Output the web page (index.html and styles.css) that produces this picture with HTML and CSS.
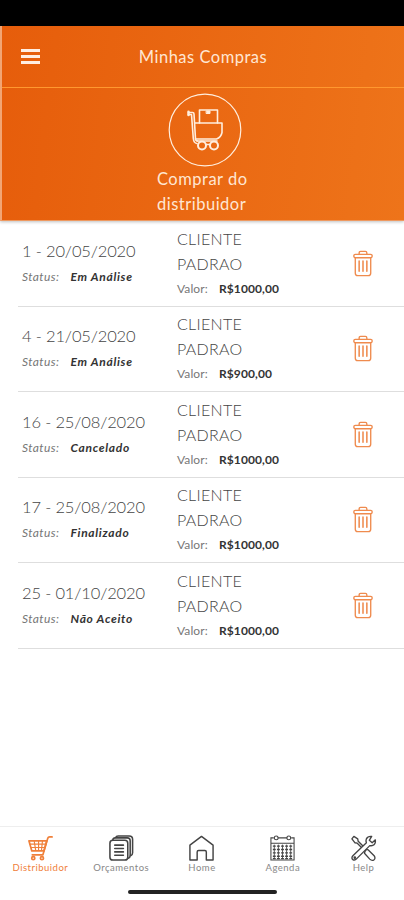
FILE: index.html
```html
<!DOCTYPE html>
<html lang="pt-br">

<head>
    <meta charset="UTF-8">
    <meta name="viewport" content="width=device-width, initial-scale=1.0">
    <title>Minhas Compras</title>
    <link rel="stylesheet" href="styles.css">
</head>

<body>
    <!-- Ícone reutilizado em cada compra -->
    <svg class="simbolos" width="0" height="0">
        <symbol id="lixeira" viewBox="0 0 22 28">
            <g fill="none" stroke="#ef8b4e" stroke-width="1.4" stroke-linecap="round" stroke-linejoin="round">
                <path d="M7 4.5V3q0-1.5 1.5-1.5h5Q15 1.5 15 3v1.500" />
                <rect x="1.500" y="4.500" width="19" height="3.500" rx="1.500" />
                <path d="M3 8v16q0 2.500 2.500 2.500h11q2.500 0 2.500-2.500V8" />
                <path d="M7 11.500v10.500M11 11.500v10.500M15 11.500v10.500" stroke-width="1.600" />
            </g>
        </symbol>
    </svg>

    <div class="barra-status"></div>

    <header>
        <div class="topo">
            <button class="menu" aria-label="Menu">
                <span></span>
                <span></span>
                <span></span>
            </button>
            <h1>Minhas Compras</h1>
        </div>
        <a href="#" class="comprar">
            <svg width="74" height="74" viewBox="0 0 74 74" fill="none" stroke="#ffeede" stroke-width="1.6" stroke-linejoin="round" stroke-linecap="round">
                <circle cx="37" cy="37" r="35.800" stroke-width="1.200" />
                <path d="M20.500 19.500h4q1.500 0 1.500 1.500l1.500 25q.2 2 2 2" />
                <path d="M20.500 21.500h3l1.800 24q.5 4.500 3.500 5" />
                <path d="M20.500 18.800v3.200" stroke-width="2.500" />
                <path d="M27 30h27v9.500q-1 5-5.500 6.500H27.500" />
                <path d="M31.500 30V17h18v13" />
                <path d="M38.500 18h3.500v2.500h-3.500z" fill="#ffeede" stroke-width="1" />
                <path d="M29 48h20M38.500 51.500h3" />
                <circle cx="34" cy="52.500" r="4" stroke-width="2" />
                <circle cx="46" cy="52.500" r="4" stroke-width="2" />
            </svg>
            <span class="comprar-texto">Comprar do distribuidor</span>
        </a>
    </header>

    <main>
        <div class="compra">
            <div class="pedido">
                <p class="data">1 - 20/05/2020</p>
                <p class="status">Status: <strong>Em Análise</strong></p>
            </div>
            <div class="cliente">
                <p class="nome">CLIENTE PADRAO</p>
                <p class="valor">Valor: <strong>R$1000,00</strong></p>
            </div>
            <button class="remover" aria-label="Remover"><svg width="22" height="27"><use href="#lixeira" /></svg></button>
        </div>
        <div class="compra">
            <div class="pedido">
                <p class="data">4 - 21/05/2020</p>
                <p class="status">Status: <strong>Em Análise</strong></p>
            </div>
            <div class="cliente">
                <p class="nome">CLIENTE PADRAO</p>
                <p class="valor">Valor: <strong>R$900,00</strong></p>
            </div>
            <button class="remover" aria-label="Remover"><svg width="22" height="27"><use href="#lixeira" /></svg></button>
        </div>
        <div class="compra">
            <div class="pedido">
                <p class="data">16 - 25/08/2020</p>
                <p class="status">Status: <strong>Cancelado</strong></p>
            </div>
            <div class="cliente">
                <p class="nome">CLIENTE PADRAO</p>
                <p class="valor">Valor: <strong>R$1000,00</strong></p>
            </div>
            <button class="remover" aria-label="Remover"><svg width="22" height="27"><use href="#lixeira" /></svg></button>
        </div>
        <div class="compra">
            <div class="pedido">
                <p class="data">17 - 25/08/2020</p>
                <p class="status">Status: <strong>Finalizado</strong></p>
            </div>
            <div class="cliente">
                <p class="nome">CLIENTE PADRAO</p>
                <p class="valor">Valor: <strong>R$1000,00</strong></p>
            </div>
            <button class="remover" aria-label="Remover"><svg width="22" height="27"><use href="#lixeira" /></svg></button>
        </div>
        <div class="compra">
            <div class="pedido">
                <p class="data">25 - 01/10/2020</p>
                <p class="status">Status: <strong>Não Aceito</strong></p>
            </div>
            <div class="cliente">
                <p class="nome">CLIENTE PADRAO</p>
                <p class="valor">Valor: <strong>R$1000,00</strong></p>
            </div>
            <button class="remover" aria-label="Remover"><svg width="22" height="27"><use href="#lixeira" /></svg></button>
        </div>
    </main>

    <nav>
        <a href="#" class="ativo">
            <svg width="27" height="27" viewBox="0 0 28 28" fill="none" stroke="currentColor" stroke-width="1.8" stroke-linecap="round" stroke-linejoin="round">
                <path d="M26 2h-2.500q-1.500 0-2 1.500L16.500 20.500H5.500" />
                <path d="M2 6h18.500l-3 10.500H5z" />
                <path d="M3 9.500h16.500M4 13h14.500M7.500 6.500l1.500 9.500M12 6.500v9.500M16 6.500L15 16" stroke-width="1.200" />
                <circle cx="6.500" cy="24" r="1.600" />
                <circle cx="15.500" cy="24" r="1.600" />
            </svg>
            <span>Distribuidor</span>
        </a>
        <a href="#">
            <svg width="27" height="27" viewBox="0 0 28 28" fill="none" stroke="currentColor" stroke-width="1.6" stroke-linecap="round" stroke-linejoin="round">
                <rect x="2" y="5.500" width="18.500" height="20.500" rx="3" />
                <path d="M5 5q.3-2 2.500-2H20q3 0 3 3v15q0 2.500-2 3" />
                <path d="M8 2.500q.5-1.500 2.500-1.500H22q3.500 0 3.500 3.500v14q0 2.500-2 3" />
                <path d="M7 10.500h9M7 14h9M7 17.500h9M7 21h9" />
            </svg>
            <span>Orçamentos</span>
        </a>
        <a href="#">
            <svg width="27" height="27" viewBox="0 0 28 28" fill="none" stroke="currentColor" stroke-width="1.5" stroke-linejoin="round">
                <path d="M2 10.500L14 1.500l12 9V26h-7v-8.500q0-1.500-1.500-1.500h-6.500q-1.500 0-1.500 1.500V26H2z" />
            </svg>
            <span>Home</span>
        </a>
        <a href="#">
            <svg width="27" height="27" viewBox="0 0 28 28" fill="none" stroke="currentColor" stroke-width="1.1">
                <path d="M5 3H2v23h24V3h-3M9 3h10M2 8.500h24" />
                <circle cx="7.500" cy="3" r="2" />
                <circle cx="20.500" cy="3" r="2" />
                <path d="M4 11.500h20M4 15h20M4 18.500h20M4 22h20M4 24.500h20" stroke-width="1.400" stroke-dasharray="3 1.250" />
                <path d="M5.500 10v15M9.750 10v15M14 10v15M18.250 10v15M22.500 10v15" stroke-width=".9" />
            </svg>
            <span>Agenda</span>
        </a>
        <a href="#">
            <svg width="27" height="27" viewBox="0 0 28 28" fill="none" stroke="currentColor" stroke-width="1.4" stroke-linejoin="round" stroke-linecap="round">
                <path d="M2 4l2-2.500 4 2.500.5 2.500 6 6M2 4l3 4 2.500.5 5.500 5.500M16 16.500l1-1.500 2 .5 6 6q2 3-.5 4.500-2 1-4-1l-5.500-6 .5-2" />
                <path d="M22.500 1.500q-4-.5-5.500 2.500-.8 2 0 4L3 21.500q-2 2.500 0 4 2 1.300 4-1L20.500 11q5 .8 5.800-3.500v-2.500L23 8l-3-2.500z" fill="#fff" />
                <circle cx="5" cy="23.500" r=".7" />
            </svg>
            <span>Help</span>
        </a>
    </nav>
    <div class="indicador"></div>
</body>

</html>
```

FILE: styles.css
```css
* {
    margin: 0;
    padding: 0;
    box-sizing: border-box;
}

body {
    display: flex;
    flex-direction: column;
    height: 100vh;
    background-color: #fff;
    color: #444;
    font-family: Lato, sans-serif;
    overflow: hidden;
}

button {
    border: none;
    background: none;
    cursor: pointer;
}

a {
    text-decoration: none;
}

.simbolos {
    display: none;
}

.barra-status {
    height: 26px;
    flex-shrink: 0;
    background-color: #000;
}

header {
    height: 195px;
    flex-shrink: 0;
    background: linear-gradient(97deg, #e65d0b, #ee741a);
    border-left: 2px solid #f2a574;
    border-bottom: 1px solid #ee9960;
    box-shadow: 0 1px 3px rgba(0, 0, 0, 0.25);
    color: #ffe6d2;
}

.topo {
    height: 62px;
    display: grid;
    grid-template-columns: 60px 1fr 60px;
    align-items: center;
    border-bottom: 1px solid #ff982f;
}

.menu {
    display: flex;
    flex-direction: column;
    gap: 3px;
    padding-left: 19px;
}

.menu span {
    width: 19px;
    height: 3px;
    background-color: #ffeee2;
}

h1 {
    font-size: 16.5px;
    font-weight: 400;
    letter-spacing: 0.5px;
    text-align: center;
}

.comprar {
    display: flex;
    flex-direction: column;
    align-items: center;
    padding-top: 5px;
    color: #ffe6d2;
}

.comprar svg {
    display: block;
    margin-left: 4px;
}

.comprar-texto {
    width: 92px;
    font-size: 16.5px;
    line-height: 25px;
    letter-spacing: 0.5px;
}

main {
    flex: 1;
    padding-left: 18px;
}

.compra {
    display: flex;
    align-items: center;
    height: 85.5px;
    padding-left: 4px;
    border-bottom: 1px solid #dedede;
}

.pedido {
    width: 155px;
    padding-top: 2px;
}

.data {
    font-size: 16.5px;
    font-weight: 300;
    line-height: 25px;
    letter-spacing: -0.15px;
}

.status,
.valor {
    font-size: 12px;
    line-height: 26px;
    color: #777;
    white-space: nowrap;
}

.status {
    font-style: italic;
    letter-spacing: 0.4px;
}

.status strong,
.valor strong {
    margin-left: 8px;
    color: #333;
}

.status strong {
    letter-spacing: 0.7px;
}

.valor {
    letter-spacing: 0.1px;
}

.cliente {
    width: 175px;
    padding-top: 1px;
}

.nome {
    width: 90px;
    font-size: 16px;
    font-weight: 300;
    line-height: 25px;
    letter-spacing: 0.3px;
}

.remover {
    display: flex;
}

nav {
    display: grid;
    grid-template-columns: repeat(5, 1fr);
    height: 59px;
    border-top: 1px solid #eee;
}

nav a {
    display: flex;
    flex-direction: column;
    align-items: center;
    padding-top: 8px;
    font-size: 9.5px;
    letter-spacing: 0.5px;
    line-height: 12px;
    color: #444;
}

nav span {
    color: #888;
}

nav .ativo,
nav .ativo span {
    color: #f0803a;
}

.indicador {
    width: 149px;
    height: 4px;
    margin: 5px auto 6px;
    border-radius: 2px;
    background-color: #222;
}
```
